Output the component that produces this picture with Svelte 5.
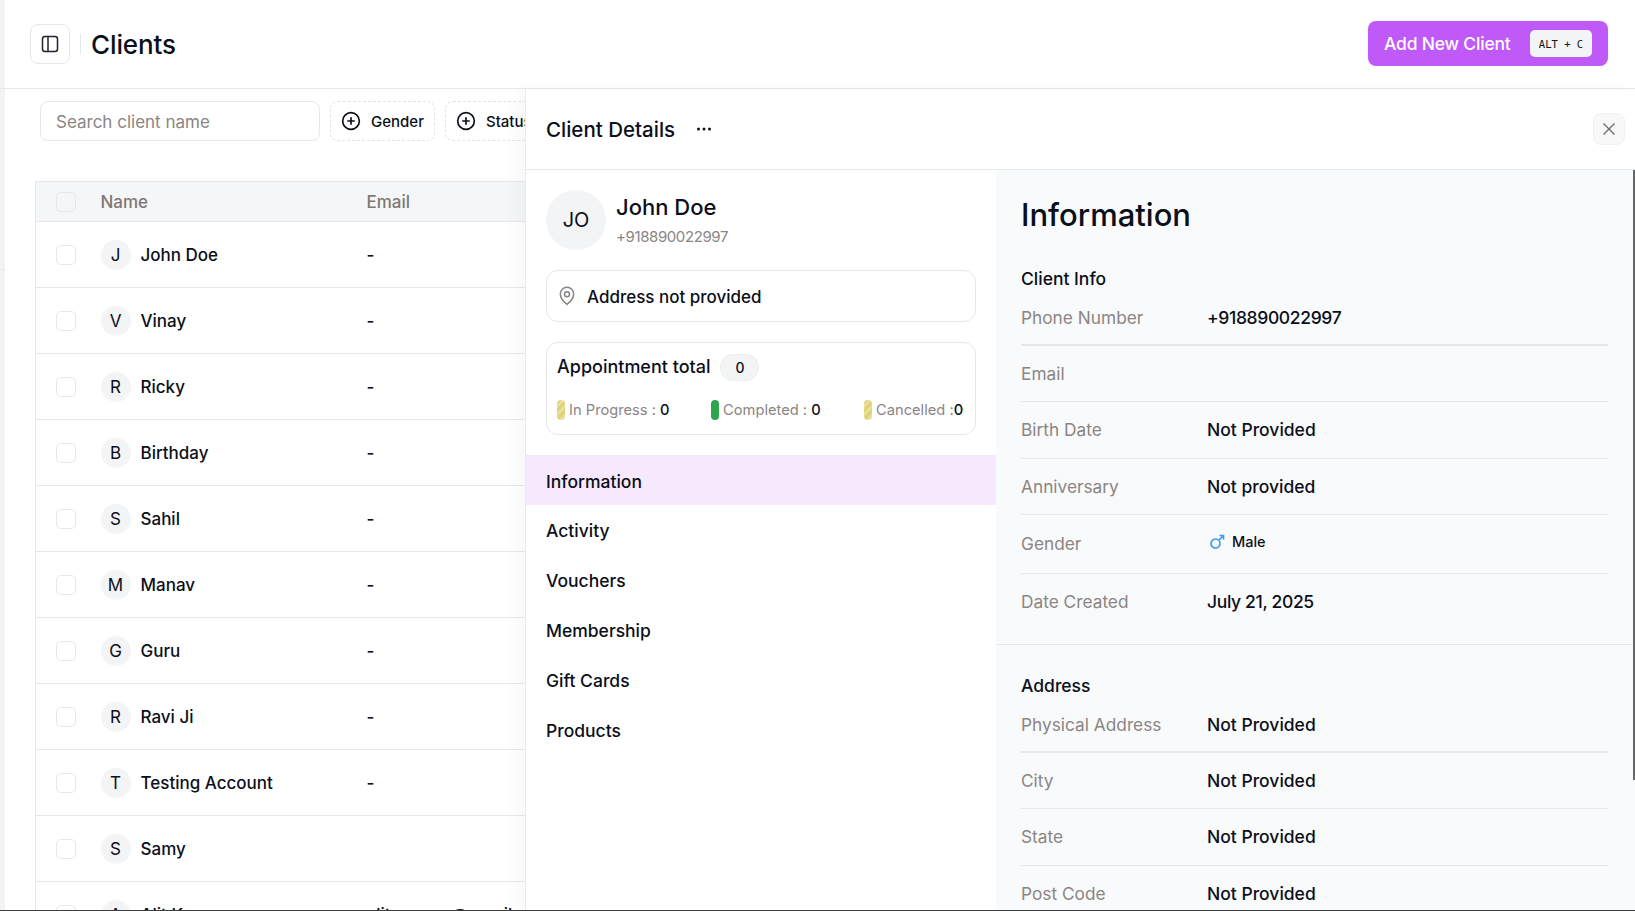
<script lang="ts">
  const clients = [
    { name: 'John Doe', email: '-' },
    { name: 'Vinay', email: '-' },
    { name: 'Ricky', email: '-' },
    { name: 'Birthday', email: '-' },
    { name: 'Sahil', email: '-' },
    { name: 'Manav', email: '-' },
    { name: 'Guru', email: '-' },
    { name: 'Ravi Ji', email: '-' },
    { name: 'Testing Account', email: '-' },
    { name: 'Samy', email: '' },
    { name: 'Alit Kumar', email: 'alitmaurya@gmail.com' },
  ];

  const navItems = ['Information', 'Activity', 'Vouchers', 'Membership', 'Gift Cards', 'Products'];

  const addressRows = [
    { label: 'Physical Address', value: 'Not Provided', thick: true },
    { label: 'City', value: 'Not Provided' },
    { label: 'State', value: 'Not Provided' },
    { label: 'Post Code', value: 'Not Provided' },
  ];
</script>

<div class="page">
  <div class="rail">
    <div class="rail-top"></div>
    <div class="rail-mid"></div>
  </div>
  <main class="main">
    <header class="topbar">
      <button class="toggle" aria-label="Toggle sidebar">
        <svg width="20" height="20" viewBox="0 0 20 20" fill="none" stroke="currentColor" stroke-width="1.5">
          <rect x="2.500" y="2.500" width="15" height="15" rx="2.500" />
          <path d="M8 2.500v15" />
        </svg>
      </button>
      <span class="divider"></span>
      <h1>Clients</h1>
      <button class="add-btn">
        Add New Client
        <kbd>ALT + C</kbd>
      </button>
    </header>

    <div class="filters">
      <input class="search" placeholder="Search client name" />
      <button class="chip">
        <svg width="20" height="20" viewBox="0 0 24 24" fill="none" stroke="currentColor" stroke-width="2">
          <circle cx="12" cy="12" r="10" /><path d="M12 7.500v9M7.500 12h9" />
        </svg>
        Gender
      </button>
      <button class="chip">
        <svg width="20" height="20" viewBox="0 0 24 24" fill="none" stroke="currentColor" stroke-width="2">
          <circle cx="12" cy="12" r="10" /><path d="M12 7.500v9M7.500 12h9" />
        </svg>
        Status
      </button>
    </div>

    <div class="table">
      <div class="row head">
        <span class="check"></span>
        <span class="col-name">Name</span>
        <span class="col-email">Email</span>
      </div>
      {#each clients as client}
        <div class="row">
          <span class="check"></span>
          <span class="col-name">
            <span class="avatar">{client.name[0]}</span>
            {client.name}
          </span>
          <span class="col-email">{client.email}</span>
        </div>
      {/each}
    </div>
  </main>

  <aside class="drawer">
    <div class="drawer-head">
      <h2>Client Details</h2>
      <svg class="dots" width="18" height="18" viewBox="0 0 18 18" fill="currentColor">
        <circle cx="3.500" cy="9" r="1.500" /><circle cx="9" cy="9" r="1.500" /><circle cx="14.500" cy="9" r="1.500" />
      </svg>
      <button class="close" aria-label="Close">
        <svg width="16" height="16" viewBox="0 0 16 16" fill="none" stroke="currentColor" stroke-width="1.4">
          <path d="M2.500 2.500l11 11M13.500 2.500l-11 11" />
        </svg>
      </button>
    </div>

    <div class="drawer-body">
      <section class="left">
        <div class="profile">
          <div class="big-avatar">JO</div>
          <div>
            <div class="profile-name">John Doe</div>
            <div class="profile-phone">+918890022997</div>
          </div>
        </div>

        <div class="card address">
          <svg width="20" height="20" viewBox="0 0 24 24" fill="none" stroke="currentColor" stroke-width="1.800">
            <path d="M12 22s8-6.200 8-12.500A8 8 0 0 0 4 9.500C4 15.800 12 22 12 22z" />
            <circle cx="12" cy="10" r="3" />
          </svg>
          Address not provided
        </div>

        <div class="card appts">
          <div class="appts-title">
            Appointment total
            <span class="count">0</span>
          </div>
          <div class="stats">
            <span class="stat"><i class="bar striped"></i>In Progress : <b>0</b></span>
            <span class="stat"><i class="bar green"></i>Completed : <b>0</b></span>
            <span class="stat"><i class="bar striped"></i>Cancelled :<b>0</b></span>
          </div>
        </div>

        <nav class="nav">
          {#each navItems as item, i}
            <div class="nav-item" class:active={i === 0}>{item}</div>
          {/each}
        </nav>
      </section>

      <section class="right">
        <div class="info-block">
          <h2 class="info-title">Information</h2>
          <h3>Client Info</h3>
          <div class="info-row thick"><span>Phone Number</span><b class="num">+918890022997</b></div>
          <div class="info-row"><span>Email</span><b></b></div>
          <div class="info-row"><span>Birth Date</span><b>Not Provided</b></div>
          <div class="info-row"><span>Anniversary</span><b>Not provided</b></div>
          <div class="info-row gender">
            <span>Gender</span>
            <b class="male">
              <svg width="16" height="16" viewBox="0 0 16 16" fill="none" stroke="#3b9cf6" stroke-width="1.700">
                <circle cx="6.500" cy="9.500" r="4.500" /><path d="M10 6l4.500-4.500M10.500 1.500h4v4" />
              </svg>
              Male
            </b>
          </div>
          <div class="info-row last"><span>Date Created</span><b class="num">July 21, 2025</b></div>
        </div>

        <div class="info-block address-block">
          <h3>Address</h3>
          {#each addressRows as row}
            <div class="info-row" class:thick={row.thick}><span>{row.label}</span><b>{row.value}</b></div>
          {/each}
        </div>
        <div class="scrollbar"></div>
      </section>
    </div>
  </aside>
  <div class="edge"></div>
</div>

<style>
  :global(body) {
    margin: 0;
    font-family: Inter, "Noto Sans", sans-serif;
    color: #0b0f19;
    background: #fff;
    overflow: hidden;
  }

  .page {
    position: relative;
    display: flex;
    height: 100vh;
    overflow: hidden;
  }

  .edge {
    position: absolute;
    left: 0;
    right: 0;
    bottom: 0;
    height: 1px;
    background: #3d3d40;
  }

  .rail {
    flex: 0 0 5px;
    background: #f3f3f4;
  }

  .rail-top {
    height: 88px;
    border-bottom: 1px solid #e6e7ea;
  }

  .rail-mid {
    height: 180px;
    border-bottom: 1px solid #e6e7ea;
  }

  .main {
    flex: 1;
    min-width: 0;
  }

  .topbar {
    display: flex;
    align-items: center;
    height: 88px;
    padding: 0 27px 0 25px;
    border-bottom: 1px solid #e6e7ea;
    box-sizing: content-box;
  }

  button {
    font-family: inherit;
    color: inherit;
    cursor: pointer;
  }

  .toggle {
    display: flex;
    align-items: center;
    justify-content: center;
    width: 40px;
    height: 40px;
    padding: 0;
    color: #1f2430;
    background: #fff;
    border: 1px solid #e6e7ea;
    border-radius: 8px;
  }

  .divider {
    width: 1px;
    height: 20px;
    margin: 0 10px;
    background: #e6e7ea;
  }

  h1 {
    margin: 0;
    font-size: 26px;
    font-weight: 500;
    letter-spacing: -0.1px;
  }

  .add-btn {
    display: flex;
    align-items: center;
    margin-left: auto;
    margin-bottom: 1px;
    width: 240px;
    height: 45px;
    padding: 0 16px;
    box-sizing: border-box;
    color: #fff;
    font-size: 17.500px;
    font-weight: 500;
    letter-spacing: -0.2px;
    white-space: nowrap;
    background: #bf5af9;
    border: 0;
    border-radius: 8px;
  }

  kbd {
    display: flex;
    flex: none;
    align-items: center;
    justify-content: center;
    width: 62px;
    height: 27px;
    margin-left: auto;
    color: #111;
    font-family: "DejaVu Sans Mono", monospace;
    font-size: 10.500px;
    letter-spacing: 0;
    background: #f3f4f6;
    border-radius: 5px;
  }

  .filters {
    display: flex;
    gap: 10px;
    padding: 12px 35px 0;
  }

  .search {
    width: 280px;
    height: 40px;
    box-sizing: border-box;
    padding: 2px 15px 0;
    font-family: inherit;
    font-size: 17px;
    background: #fff;
    border: 1px solid #e6e7ea;
    border-radius: 8px;
    outline: none;
  }

  .search::placeholder {
    color: #8b8583;
  }

  .chip {
    display: flex;
    align-items: center;
    gap: 10px;
    height: 40px;
    padding: 0 10px;
    font-size: 15px;
    font-weight: 500;
    white-space: nowrap;
    background: #fff;
    border: 1px dashed #e2e3e6;
    border-radius: 8px;
  }

  .table {
    margin: 40px 0 0 30px;
    border-left: 1px solid #e6e7ea;
  }

  .row {
    display: grid;
    grid-template-columns: 44.500px 266px 1fr;
    align-items: center;
    height: 66px;
    box-sizing: border-box;
    padding-left: 20px;
    font-size: 17px;
    font-weight: 500;
    border-bottom: 1px solid #e6e7ea;
  }

  .row.head {
    height: 41px;
    color: #7f7874;
    background: #f5f6f8;
    border-top: 1px solid #e6e7ea;
  }

  .check {
    width: 20px;
    height: 20px;
    box-sizing: border-box;
    background: #fff;
    border: 1px solid #e6e7ea;
    border-radius: 5px;
  }

  .head .check {
    background: #f5f6f8;
  }

  .col-name {
    display: flex;
    align-items: center;
    gap: 10px;
    white-space: nowrap;
  }

  .col-email {
    white-space: nowrap;
  }

  .avatar {
    display: flex;
    align-items: center;
    justify-content: center;
    width: 30px;
    height: 30px;
    font-size: 17px;
    font-weight: 400;
    background: #f3f4f6;
    border-radius: 50%;
  }

  .drawer {
    position: absolute;
    top: 89px;
    left: 525px;
    right: 0;
    bottom: 0;
    display: flex;
    flex-direction: column;
    background: #fff;
    border-left: 1px solid #e9eaec;
    box-shadow: -8px 0 16px rgba(0, 0, 0, 0.03);
  }

  .drawer-head {
    display: flex;
    align-items: center;
    height: 80px;
    padding: 0 10px 0 20px;
    flex: none;
    border-bottom: 1px solid #e6e7ea;
  }

  .drawer-head h2 {
    margin: 0;
    font-size: 20.500px;
    font-weight: 500;
  }

  .dots {
    margin-left: 20px;
  }

  .close {
    display: flex;
    align-items: center;
    justify-content: center;
    width: 32px;
    height: 32px;
    margin-left: auto;
    padding: 0;
    color: #6f6f73;
    background: #f8f8f9;
    border: 1px solid #f1f1f2;
    border-radius: 8px;
  }

  .drawer-body {
    display: flex;
    flex: 1;
    min-height: 0;
  }

  .left {
    flex: 0 0 470px;
    padding-top: 20px;
  }

  .profile {
    display: flex;
    gap: 10px;
    padding: 0 20px;
  }

  .big-avatar {
    display: flex;
    align-items: center;
    justify-content: center;
    width: 60px;
    height: 60px;
    font-size: 20px;
    background: #f3f4f6;
    border-radius: 50%;
  }

  .profile-name {
    margin-top: 2px;
    font-size: 22px;
    font-weight: 500;
    line-height: 30px;
  }

  .profile-phone {
    margin-top: 5px;
    color: #8b8583;
    font-size: 15px;
    letter-spacing: -0.4px;
    line-height: 20px;
  }

  .card {
    box-sizing: border-box;
    margin: 20px 20px 0;
    background: #fff;
    border: 1px solid #e6e7ea;
    border-radius: 12px;
  }

  .address {
    display: flex;
    align-items: center;
    gap: 10px;
    height: 52px;
    padding: 2px 10px 0;
    color: #0b0f19;
    font-size: 17px;
    font-weight: 500;
  }

  .address svg {
    margin-top: -2px;
    color: #85858a;
  }

  .appts {
    height: 93px;
    padding: 10px 10px 0;
  }

  .appts-title {
    display: flex;
    align-items: center;
    gap: 10px;
    font-size: 18px;
    font-weight: 500;
    height: 26px;
  }

  .count {
    display: flex;
    align-items: center;
    justify-content: center;
    width: 37px;
    height: 25px;
    margin-top: 2px;
    font-size: 14px;
    background: #f3f4f6;
    border: 1px solid #eceef0;
    border-radius: 13px;
  }

  .stats {
    display: grid;
    grid-template-columns: 154px 153px 1fr;
    margin-top: 21px;
  }

  .stat {
    display: flex;
    align-items: center;
    color: #8b8583;
    font-size: 14.700px;
    white-space: pre;
  }

  .stat b {
    color: #0b0f19;
    font-weight: 500;
  }

  .bar {
    width: 8px;
    height: 20px;
    margin-right: 4px;
    border-radius: 4px;
  }

  .bar.green {
    background: #2ea650;
  }

  .bar.striped {
    background: repeating-linear-gradient(135deg, #e0d377 0 3px, #e9de9a 3px 6px);
  }

  .nav {
    margin-top: 20px;
  }

  .nav-item {
    display: flex;
    align-items: center;
    height: 50px;
    box-sizing: border-box;
    padding: 1px 20px 0;
    font-size: 17.500px;
    font-weight: 500;
  }

  .nav-item.active {
    background: #f6e9fd;
    border-top: 1px solid #ececf0;
  }

  .right {
    position: relative;
    flex: 1;
    min-width: 0;
    background: #f9fafb;
  }

  .info-block {
    padding: 0 27px 0 25px;
  }

  .info-title {
    margin: 0;
    padding-top: 23px;
    font-size: 31px;
    font-weight: 500;
    line-height: 44px;
  }

  h3 {
    margin: 0;
    font-size: 17.500px;
    font-weight: 500;
    line-height: 24px;
  }

  .info-block > h3 {
    padding-top: 30px;
  }

  .address-block > h3 {
    padding-top: 29px;
  }

  .info-row {
    display: grid;
    grid-template-columns: 186px 1fr;
    align-items: center;
    height: 56.250px;
    box-sizing: border-box;
    font-size: 17.300px;
    border-bottom: 1px solid #e6e7ea;
  }

  .info-row.thick {
    height: 55px;
    border-bottom-width: 2px;
  }

  .info-row.gender {
    height: 59px;
  }

  .info-row.last {
    border-bottom: 0;
  }

  .info-row span {
    color: #8b8583;
  }

  .info-row b {
    font-size: 17.500px;
    font-weight: 500;
  }

  .info-row b.num {
    letter-spacing: -0.35px;
  }

  .info-row b.male {
    display: flex;
    align-items: center;
    gap: 7px;
    padding-left: 2px;
    margin-top: -4px;
    font-size: 14.500px;
  }

  .address-block {
    margin-top: 14px;
    border-top: 1px solid #e6e7ea;
  }

  .scrollbar {
    position: absolute;
    top: 0;
    right: 0;
    width: 2px;
    height: 610px;
    background: #66676b;
  }
</style>
